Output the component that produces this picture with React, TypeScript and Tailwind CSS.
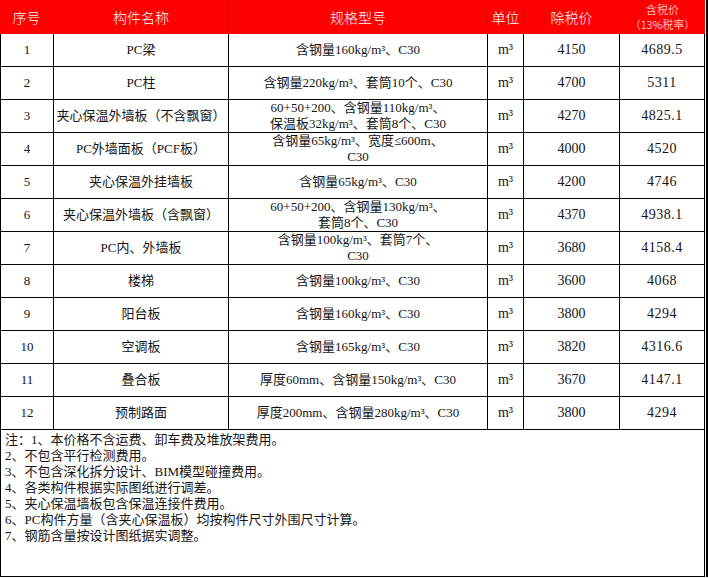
import React from 'react';

interface Row {
  no: number;
  name: string;
  spec: string[];
  price: string;
  taxPrice: string;
}

const rows: Row[] = [
  { no: 1, name: 'PC梁', spec: ['含钢量160kg/m³、C30'], price: '4150', taxPrice: '4689.5' },
  { no: 2, name: 'PC柱', spec: ['含钢量220kg/m³、套筒10个、C30'], price: '4700', taxPrice: '5311' },
  {
    no: 3,
    name: '夹心保温外墙板（不含飘窗）',
    spec: ['60+50+200、含钢量110kg/m³、', '保温板32kg/m³、套筒8个、C30'],
    price: '4270',
    taxPrice: '4825.1',
  },
  { no: 4, name: 'PC外墙面板（PCF板）', spec: ['含钢量65kg/m³、宽度≤600m、', 'C30'], price: '4000', taxPrice: '4520' },
  { no: 5, name: '夹心保温外挂墙板', spec: ['含钢量65kg/m³、C30'], price: '4200', taxPrice: '4746' },
  {
    no: 6,
    name: '夹心保温外墙板（含飘窗）',
    spec: ['60+50+200、含钢量130kg/m³、', '套筒8个、C30'],
    price: '4370',
    taxPrice: '4938.1',
  },
  { no: 7, name: 'PC内、外墙板', spec: ['含钢量100kg/m³、套筒7个、', 'C30'], price: '3680', taxPrice: '4158.4' },
  { no: 8, name: '楼梯', spec: ['含钢量100kg/m³、C30'], price: '3600', taxPrice: '4068' },
  { no: 9, name: '阳台板', spec: ['含钢量160kg/m³、C30'], price: '3800', taxPrice: '4294' },
  { no: 10, name: '空调板', spec: ['含钢量165kg/m³、C30'], price: '3820', taxPrice: '4316.6' },
  { no: 11, name: '叠合板', spec: ['厚度60mm、含钢量150kg/m³、C30'], price: '3670', taxPrice: '4147.1' },
  { no: 12, name: '预制路面', spec: ['厚度200mm、含钢量280kg/m³、C30'], price: '3800', taxPrice: '4294' },
];

const notes = [
  '注：1、本价格不含运费、卸车费及堆放架费用。',
  '2、不包含平行检测费用。',
  '3、不包含深化拆分设计、BIM模型碰撞费用。',
  '4、各类构件根据实际图纸进行调差。',
  '5、夹心保温墙板包含保温连接件费用。',
  '6、PC构件方量（含夹心保温板）均按构件尺寸外围尺寸计算。',
  '7、钢筋含量按设计图纸据实调整。',
];

const cols = 'grid grid-cols-[54px_175px_259px_36px_96px_85px]';
const cell = 'flex flex-col items-center justify-center text-center border-r border-b border-black';
const headCell = 'flex flex-col items-center justify-center text-center border-r border-[#e40000]';

export default function App() {
  return (
    <div className="w-[708px] h-[578px] bg-white font-['Liberation_Serif','Noto_Sans_CJK_SC',serif] text-[13px] text-[#151515]">
      <div className="w-[708px] border-r-2 border-black pr-px">
        <div className={`${cols} h-[34px] bg-[#ff0000] text-white font-['Noto_Sans_CJK_SC',sans-serif] text-[14px] font-light`}>
          <div className={headCell}>序号</div>
          <div className={headCell}>构件名称</div>
          <div className={headCell}>规格型号</div>
          <div className={headCell}>单位</div>
          <div className={headCell}>除税价</div>
          <div className="flex flex-col items-center justify-center text-center text-[11px] leading-[15px]">
            <span className="block h-[15px] overflow-hidden">含税价</span>
            <span className="block h-[15px] overflow-hidden">（13%税率）</span>
          </div>
        </div>

        {rows.map((r) => (
          <div key={r.no} className={`${cols} h-[33px] leading-[16px]`}>
            <div className={`${cell} border-l`}>{r.no}</div>
            <div className={cell}>{r.name}</div>
            <div className={cell}>
              {r.spec.map((s) => (
                <span key={s}>{s}</span>
              ))}
            </div>
            <div className={`${cell} text-[14px]`}>m³</div>
            <div className={`${cell} text-[14px]`}>{r.price}</div>
            <div className={`${cell} text-[14px] tracking-[0.5px]`}>{r.taxPrice}</div>
          </div>
        ))}

        <div className="h-[147px] border-l border-r border-b border-black pl-1 pt-[2px] leading-[16px]">
          {notes.map((n) => (
            <div key={n}>{n}</div>
          ))}
        </div>
      </div>
    </div>
  );
}
